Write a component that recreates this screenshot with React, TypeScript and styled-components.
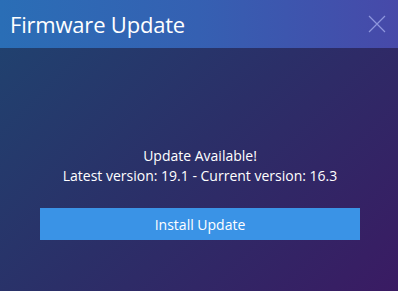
import React from "react";
import styled, { createGlobalStyle } from "styled-components";

const GlobalStyle = createGlobalStyle`
  html, body {
    margin: 0;
    padding: 0;
    width: 100%;
    height: 100%;
  }

  #root {
    height: 100%;
  }
`;

const Dialog = styled.div`
  display: flex;
  flex-direction: column;
  width: 398px;
  height: 291px;
  font-family: "Open Sans", "Noto Sans", sans-serif;
  color: #ffffff;
  background: linear-gradient(135deg, #1f4470 0%, #2b2f68 50%, #3a1b63 100%);
  overflow: hidden;
`;

const Header = styled.div`
  display: flex;
  align-items: center;
  justify-content: space-between;
  height: 48px;
  padding: 0 10px;
  box-sizing: border-box;
  background: linear-gradient(90deg, #2a6eb6 0%, #3560b2 50%, #4749a9 100%);
`;

const Title = styled.h1`
  margin: 0;
  font-size: 22px;
  font-weight: 400;
  letter-spacing: -0.2px;
`;

const CloseButton = styled.button`
  display: flex;
  align-items: center;
  justify-content: center;
  width: 24px;
  height: 24px;
  padding: 0;
  margin-right: -1px;
  border: none;
  background: transparent;
  color: rgba(190, 200, 255, 0.6);
  cursor: pointer;
`;

const Body = styled.div`
  display: flex;
  flex: 1;
  flex-direction: column;
  align-items: center;
  padding: 98px 38px 0 40px;
`;

const Message = styled.p`
  margin: 0;
  font-size: 14px;
  line-height: 20px;
  text-align: center;
`;

const InstallButton = styled.button`
  width: 100%;
  height: 32px;
  margin-top: 22px;
  border: none;
  background: #3a93e6;
  color: #ffffff;
  font-family: inherit;
  font-size: 14px;
  cursor: pointer;
`;

export default function App() {
  return (
    <>
      <GlobalStyle />
      <Dialog>
        <Header>
          <Title>Firmware Update</Title>
          <CloseButton aria-label="Close">
            <svg width="18" height="18" viewBox="0 0 18 18">
              <path d="M1 1 L17 17 M17 1 L1 17" stroke="currentColor" strokeWidth="1.2" />
            </svg>
          </CloseButton>
        </Header>
        <Body>
          <Message>
            Update Available!
            <br />
            Latest version: 19.1 - Current version: 16.3
          </Message>
          <InstallButton>Install Update</InstallButton>
        </Body>
      </Dialog>
    </>
  );
}
